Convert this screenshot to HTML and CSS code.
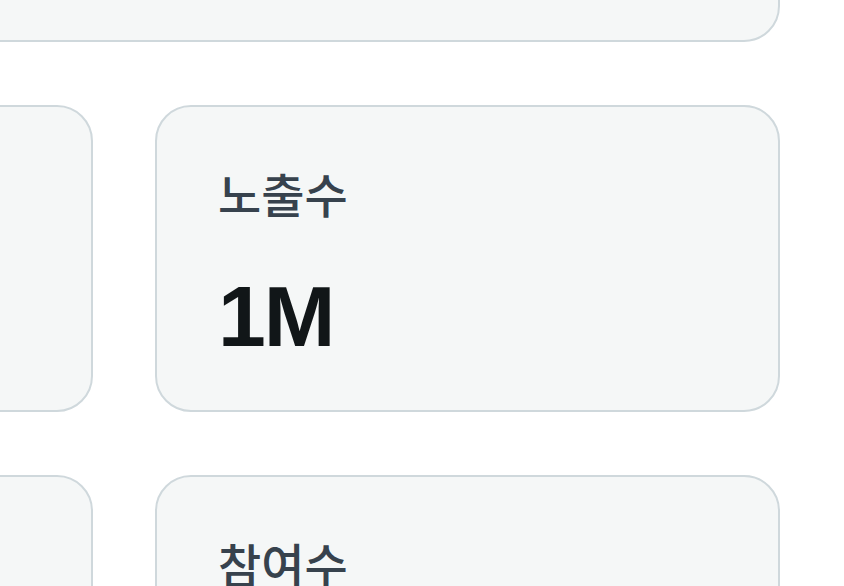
FILE: index.html
```html
<!DOCTYPE html>
<html lang="ko">
<head>
<meta charset="utf-8">
<link rel="stylesheet" href="styles.css">
</head>
<body>
<div class="page">
  <div class="card card-wide"></div>
  <div class="grid">
    <div class="card"></div>
    <div class="card">
      <div class="label">노출수</div>
      <div class="value">1M</div>
    </div>
    <div class="card"></div>
    <div class="card">
      <div class="label">참여수</div>
      <div class="value">12K</div>
    </div>
  </div>
</div>
</body>
</html>
```
FILE: styles.css
```css
html, body {
  margin: 0;
  padding: 0;
  background: #ffffff;
  overflow: hidden;
}
.page {
  margin-left: -400px;
  margin-top: -200px;
  width: 1180px;
  display: flex;
  flex-direction: column;
  gap: 63px;
}
.card {
  box-sizing: border-box;
  background: #f5f7f7;
  border: 2px solid #cfd8dc;
  border-radius: 36px;
}
.card-wide {
  height: 242px;
}
.grid {
  display: grid;
  grid-template-columns: 493px 625px;
  column-gap: 62px;
  row-gap: 63px;
  grid-auto-rows: 307px;
}
.grid .card {
  padding: 58px 61px;
  display: flex;
  flex-direction: column;
}
.label {
  font-family: "Noto Sans CJK KR", "Noto Sans", sans-serif;
  font-size: 47px;
  font-weight: 500;
  line-height: 1.2;
  color: #37424d;
}
.value {
  margin-top: 52px;
  font-family: "Liberation Sans", Arial, sans-serif;
  font-weight: 700;
  font-size: 86px;
  line-height: 1;
  color: #111618;
  letter-spacing: -2px;
}
```
